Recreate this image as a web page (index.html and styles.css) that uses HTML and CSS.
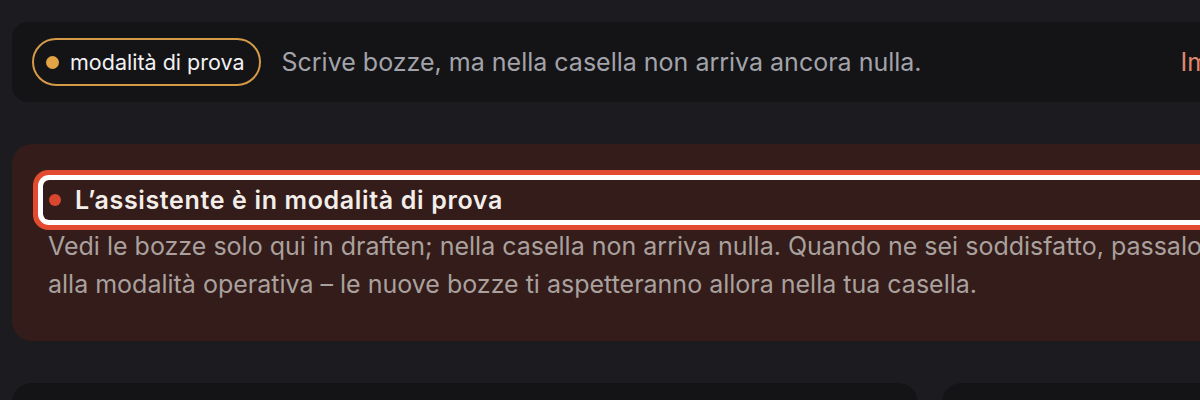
FILE: index.html
```html
<!DOCTYPE html>
<html lang="it">
<head>
<meta charset="utf-8">
<title>drafts</title>
<link rel="stylesheet" href="styles.css">
</head>
<body>
<div class="page">
  <section class="status-card">
    <span class="pill"><span class="pill-dot"></span>modalità di prova</span>
    <span class="status-text">Scrive bozze, ma nella casella non arriva ancora nulla.</span>
    <a class="status-link" href="#">Imposta</a>
  </section>
  <section class="notice-card">
    <h2 class="notice-title" tabindex="-1"><span class="notice-dot"></span>L’assistente è in modalità di prova</h2>
    <p class="notice-text">Vedi le bozze solo qui in draften; nella casella non arriva nulla. Quando ne sei soddisfatto, passalo alla modalità operativa – le nuove bozze ti aspetteranno allora nella tua casella.</p>
  </section>
  <div class="grid">
    <div class="panel"></div>
    <div class="panel"></div>
  </div>
</div>
</body>
</html>
```
FILE: styles.css
```css
html, body {
  margin: 0;
  padding: 0;
  background: #1c1b20;
  overflow: hidden;
  font-family: Inter, "Noto Sans", "Liberation Sans", sans-serif;
}
.page {
  width: 1383px;
  padding: 22px 12px;
  display: flex;
  flex-direction: column;
  gap: 42px;
}
.status-card {
  height: 80px;
  box-sizing: border-box;
  background: #141416;
  border-radius: 16px;
  padding: 0 24px 0 20px;
  display: flex;
  align-items: center;
  gap: 20px;
}
.pill {
  display: inline-flex;
  align-items: center;
  gap: 11px;
  height: 48px;
  box-sizing: border-box;
  border: 2px solid #d49a48;
  border-radius: 999px;
  padding: 0 15px 0 12px;
  color: #f1f1f3;
  font-size: 21.5px;
  white-space: nowrap;
}
.pill-dot {
  width: 13px;
  height: 13px;
  border-radius: 50%;
  background: #e3a445;
}
.status-text {
  color: #a3a3ab;
  font-size: 25px;
  white-space: nowrap;
}
.status-link {
  margin-left: 239px;
  color: #e0876f;
  font-size: 25px;
  text-decoration: none;
  white-space: nowrap;
}
.notice-card {
  background: #331c19;
  border-radius: 20px;
  padding: 36px 36px 38px 31px;
}
.notice-title {
  margin: 0;
  height: 40px;
  display: flex;
  align-items: center;
  gap: 14px;
  padding-left: 6px;
  border-radius: 6px;
  box-shadow: 0 0 0 5px #ffffff, 0 0 0 10px #e24b2f;
  color: #f3ede9;
  font-size: 25px;
  font-weight: 600;
  letter-spacing: 0.65px;
  outline: none;
}
.notice-dot {
  width: 12px;
  height: 12px;
  border-radius: 50%;
  background: #da472e;
  flex: none;
}
.notice-text {
  margin: 7px 0 0 5px;
  max-width: 1185px;
  color: #aaa19f;
  font-size: 25px;
  line-height: 38px;
}
.grid {
  display: grid;
  grid-template-columns: 2fr 1fr;
  gap: 24px;
}
.panel {
  height: 220px;
  background: #141416;
  border-radius: 20px;
}
```
